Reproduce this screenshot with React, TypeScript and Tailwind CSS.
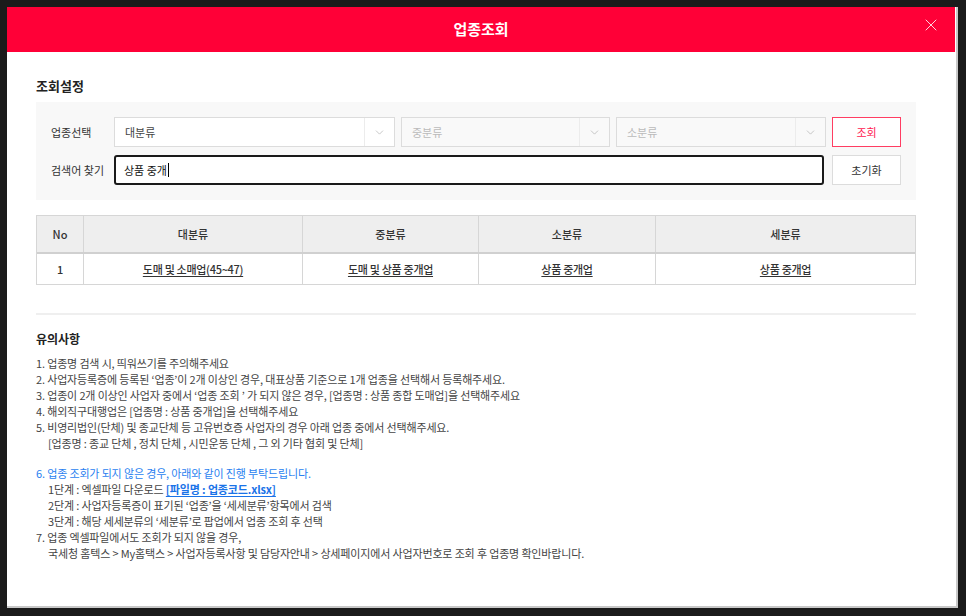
import { ChevronDown, X } from "lucide-react";

const font = { fontFamily: '"Noto Sans CJK KR", "Noto Sans", sans-serif' };

function Select({ label, disabled, width }: { label: string; disabled?: boolean; width: string }) {
  return (
    <div
      className={`flex h-[30px] ${width} border border-[#dcdcdc] ${
        disabled ? "bg-[#f9f9f9] text-[#bbbbbb]" : "bg-white text-[#444]"
      }`}
    >
      <span className="flex flex-1 items-center pl-[10px] text-[11px]">{label}</span>
      <span className="flex w-[30px] items-center justify-center border-l border-[#ececec]">
        <ChevronDown className="h-[13px] w-[13px] text-[#aaa]" strokeWidth={1.2} />
      </span>
    </div>
  );
}

const columns = [
  { name: "No", width: "w-[46px]", value: "1", link: false },
  { name: "대분류", width: "w-[219px]", value: "도매 및 소매업(45~47)", link: true },
  { name: "중분류", width: "w-[176px]", value: "도매 및 상품 중개업", link: true },
  { name: "소분류", width: "w-[177px]", value: "상품 중개업", link: true },
  { name: "세분류", width: "flex-1", value: "상품 중개업", link: true },
];

const notes = [
  "1. 업종명 검색 시, 띄워쓰기를 주의해주세요",
  "2. 사업자등록증에 등록된 ‘업종’이 2개 이상인 경우, 대표상품 기준으로 1개 업종을 선택해서 등록해주세요.",
  "3. 업종이 2개 이상인 사업자 중에서 ‘업종 조회 ’ 가 되지 않은 경우, [업종명 : 상품 종합 도매업]을 선택해주세요",
  "4. 해외직구대행업은 [업종명 : 상품 중개업]을 선택해주세요",
  "5. 비영리법인(단체) 및 종교단체 등 고유번호증 사업자의 경우 아래 업종 중에서 선택해주세요.",
];

export default function App() {
  return (
    <div className="h-[616px] w-[966px] bg-[#1b1b1b] pl-[7px] pt-[7px]" style={font}>
      <div className="flex h-[601px] w-[951px] flex-col border-b-2 border-r-2 border-[#c8c8c8] bg-white">
        <header className="relative flex h-[45px] w-[948px] items-center justify-center bg-[#ff0037]">
          <h1 className="text-[15px] font-bold text-white">업종조회</h1>
          <X className="absolute right-[14px] top-[8px] h-[20px] w-[20px] text-white/90" strokeWidth={1.1} />
        </header>

        <div className="w-[880px] pl-[29px]">
          <h2 className="mt-[25px] text-[13px] font-bold leading-[18px] text-[#222]">조회설정</h2>

          <div className="mt-[7px] flex w-[880px] flex-col gap-[8px] bg-[#f8f8f8] px-[15px] py-[15px]">
            <div className="flex items-center">
              <span className="w-[64px] text-[11px] text-[#333]">업종선택</span>
              <div className="flex gap-[6px]">
                <Select label="대분류" width="w-[281px]" />
                <Select label="중분류" disabled width="w-[209px]" />
                <Select label="소분류" disabled width="w-[210px]" />
                <button className="h-[30px] w-[69px] border border-[#ff3d62] bg-white text-[11px] text-[#ff2050]">
                  조회
                </button>
              </div>
            </div>
            <div className="flex items-center">
              <span className="w-[64px] text-[11px] text-[#333]">검색어 찾기</span>
              <div className="flex items-center gap-[8px]">
                <div className="flex h-[30px] w-[710px] items-center rounded-[3px] border-2 border-[#1a1a1a] bg-white pl-[8px] text-[11px] text-[#111]">
                  상품 중개
                  <span className="ml-[1px] h-[14px] w-[1px] bg-black" />
                </div>
                <button className="h-[30px] w-[69px] border border-[#dcdcdc] bg-white text-[11px] text-[#333]">
                  초기화
                </button>
              </div>
            </div>
          </div>

          <div className="mt-[15px] w-[880px] border border-[#d6d6d6] text-[11px] text-[#333]">
            <div className="flex h-[38px] border-b-2 border-[#d0d0d0] bg-[#eeeeee]">
              {columns.map((c, i) => (
                <div
                  key={c.name}
                  className={`flex ${c.width} items-center justify-center font-medium ${
                    i > 0 ? "border-l border-[#d6d6d6]" : ""
                  }`}
                >
                  {c.name}
                </div>
              ))}
            </div>
            <div className="flex h-[30px]">
              {columns.map((c, i) => (
                <div
                  key={c.name}
                  className={`flex ${c.width} items-center justify-center font-medium tracking-[-0.3px] ${
                    i > 0 ? "border-l border-[#d6d6d6]" : ""
                  }`}
                >
                  <span className={c.link ? "underline underline-offset-2" : ""}>{c.value}</span>
                </div>
              ))}
            </div>
          </div>

          <div className="mt-[28px] h-[2px] w-[880px] bg-[#efefef]" />

          <h3 className="mt-[16px] text-[12px] font-bold leading-[16px] text-[#222]">유의사항</h3>

          <div className="mt-[8px] text-[11px] leading-[16px] tracking-[-0.15px] text-[#444]">
            {notes.map((n) => (
              <p key={n}>{n}</p>
            ))}
            <p className="pl-[12px]">[업종명 : 종교 단체 , 정치 단체 , 시민운동 단체 , 그 외 기타 협회 및 단체]</p>
            <p className="mt-[14px] text-[#2a7ff0]">6. 업종 조회가 되지 않은 경우, 아래와 같이 진행 부탁드립니다.</p>
            <p className="pl-[12px]">
              1단계 : 엑셀파일 다운로드{" "}
              <a href="#" className="font-bold text-[#1a73e8] underline underline-offset-2">
                [파일명 : 업종코드.xlsx]
              </a>
            </p>
            <p className="pl-[12px]">2단계 : 사업자등록증이 표기된 ‘업종’을 ‘세세분류’항목에서 검색</p>
            <p className="pl-[12px]">3단계 : 해당 세세분류의 ‘세분류’로 팝업에서 업종 조회 후 선택</p>
            <p>7. 업종 엑셀파일에서도 조회가 되지 않을 경우,</p>
            <p className="pl-[12px]">
              국세청 홈텍스 &gt; My홈택스 &gt; 사업자등록사항 및 담당자안내 &gt; 상세페이지에서 사업자번호로 조회 후 업종명 확인바랍니다.
            </p>
          </div>
        </div>
      </div>
    </div>
  );
}
